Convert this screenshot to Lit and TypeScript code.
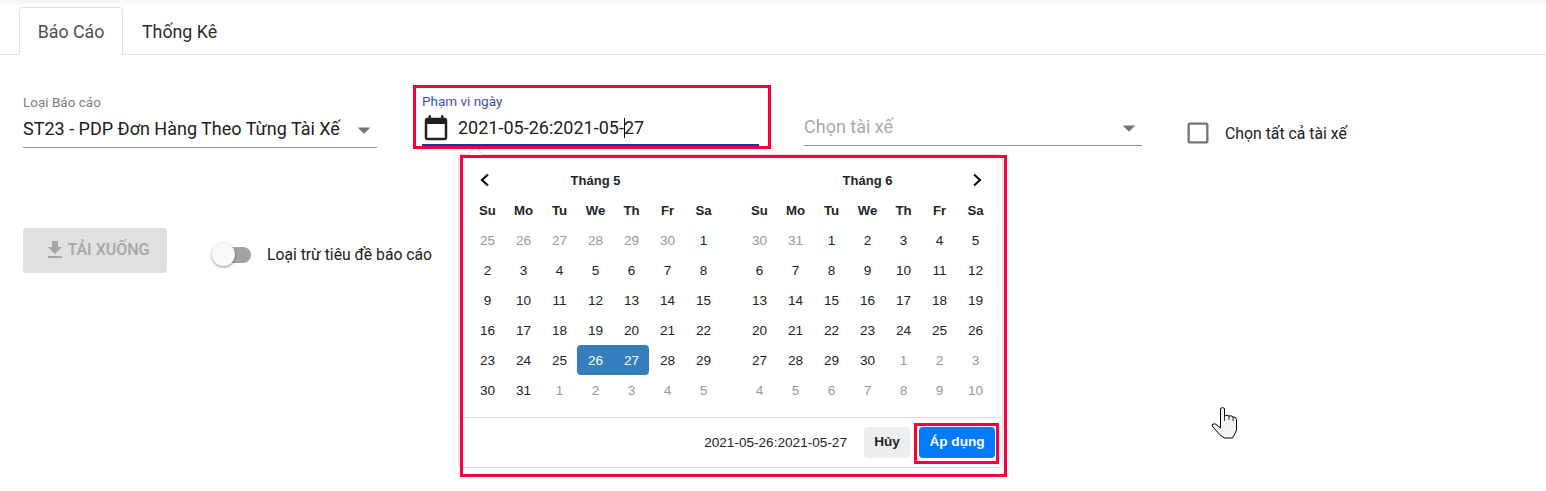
import { LitElement, html, css, svg } from "lit";
import { customElement } from "lit/decorators.js";

type Day = { d: number; off?: boolean; sel?: "start" | "end" };

const range = (a: number, b: number, off = false): Day[] => {
  const r: Day[] = [];
  for (let i = a; i <= b; i++) r.push({ d: i, off });
  return r;
};

const may: Day[] = [
  ...range(25, 30, true),
  ...range(1, 25),
  { d: 26, sel: "start" },
  { d: 27, sel: "end" },
  ...range(28, 31),
  ...range(1, 5, true),
];
const june: Day[] = [...range(30, 31, true), ...range(1, 30), ...range(1, 10, true)];
const WEEK = ["Su", "Mo", "Tu", "We", "Th", "Fr", "Sa"];

const arrowDown = svg`<path d="M7 10l5 5 5-5z"></path>`;

@customElement("app-root")
export class AppRoot extends LitElement {
  static styles = css`
    :host {
      display: block;
      position: relative;
      width: 1546px;
      height: 491px;
      overflow: hidden;
      background: #fff;
      font-family: Roboto, "Noto Sans", sans-serif;
      color: #212121;
    }
    .topshade {
      height: 7px;
      margin-bottom: -7px;
      background: linear-gradient(#f5f5f5, #fff);
    }
    .tabs {
      display: flex;
      height: 47px;
      padding-top: 7px;
      padding-left: 19px;
      border-bottom: 1px solid #dee2e6;
      font-size: 17.8px;
    }
    .tab {
      box-sizing: border-box;
      height: 48px;
      padding: 0 18px;
      display: flex;
      align-items: center;
      justify-content: center;
      border: 1px solid transparent;
      color: #2b2b2b;
    }
    .tab.active {
      width: 104px;
      padding: 0;
      border-color: #dee2e6 #dee2e6 #fff;
      border-radius: 4px 4px 0 0;
      background: #fff;
      color: #495057;
    }
    .row1 {
      display: flex;
      align-items: flex-start;
      padding: 37px 0 0 23px;
      height: 56px;
    }
    .label {
      font-size: 13.5px;
      line-height: 16px;
      color: #808080;
      white-space: nowrap;
    }
    .f1 { width: 354px; margin-top: 2px; margin-right: 45px; }
    .f2 { width: 337px; margin-right: 45px; margin-top: 1px; }
    .f3 { width: 338px; margin-right: 45px; margin-top: 16px; }
    .select {
      box-sizing: border-box;
      display: flex;
      align-items: center;
      justify-content: space-between;
      border-bottom: 1px solid #949494;
      white-space: nowrap;
    }
    .f1 .select { height: 38px; font-size: 18px; color: #212121; }
    .f3 .select { height: 38px; font-size: 18px; color: #a9a9a9; }
    .select svg { width: 30px; height: 30px; fill: #757575; margin: 2px -2px 0 0; }
    .f2 .label { color: #3f51b5; }
    .date {
      box-sizing: border-box;
      display: flex;
      align-items: center;
      height: 37px;
      padding-top: 1px;
      border-bottom: 2px solid #283593;
      font-size: 18px;
      color: #212121;
    }
    .date svg { width: 30px; height: 30px; margin: 3px 7px 0 -1px; fill: #212121; flex: none; }
    .caret { display: inline-block; width: 1px; height: 20px; background: #000; vertical-align: -4px; margin-right: -1px; }
    .check {
      display: flex;
      align-items: center;
      margin-top: 27px;
      font-size: 15.8px;
      white-space: nowrap;
    }
    .check svg { width: 28px; height: 28px; fill: #757575; margin-left: -3px; margin-right: 13px; }
    .row2 {
      display: flex;
      align-items: flex-start;
      margin-top: 80px;
      padding-left: 23px;
    }
    .download {
      box-sizing: border-box;
      display: flex;
      align-items: center;
      justify-content: center;
      width: 144px;
      height: 45px;
      padding: 0 0 2px 5px;
      border-radius: 4px;
      background: #e0e0e0;
      color: #a6a6a6;
      font-size: 16px;
      font-weight: 500;
    }
    .download svg { width: 24px; height: 24px; fill: #a6a6a6; margin-right: 1px; margin-left: -3px; }
    .toggle {
      display: flex;
      align-items: center;
      margin-left: 45px;
      margin-top: 17px;
      font-size: 15.7px;
      white-space: nowrap;
    }
    .track {
      position: relative;
      width: 36px;
      height: 16px;
      margin-left: 3px;
      margin-right: 16px;
      border-radius: 8px;
      background: #a3a3a3;
    }
    .thumb {
      position: absolute;
      left: -3px;
      top: -4px;
      width: 23px;
      height: 23px;
      border-radius: 50%;
      background: #fafafa;
      box-shadow: 0 1px 3px rgba(0, 0, 0, 0.45);
    }
    .popup {
      position: absolute;
      left: 458px;
      top: 154px;
      box-sizing: border-box;
      width: 545px;
      height: 314px;
      border: 1px solid #ddd;
      border-radius: 4px;
      background: #fff;
      font-family: "Liberation Sans", Arial, sans-serif;
      font-size: 13.6px;
      color: #212529;
    }
    .notch {
      position: absolute;
      left: 11px;
      top: -7px;
      width: 10px;
      height: 10px;
      transform: rotate(45deg) scale(0.95);
      border-left: 1px solid #ddd;
      border-top: 1px solid #ddd;
      background: #fff;
    }
    .cals {
      display: flex;
      gap: 20px;
      padding: 10px 0 0 10px;
      height: 252px;
    }
    .grid {
      display: grid;
      grid-template-columns: repeat(7, 36px);
      grid-auto-rows: 30px;
      width: 252px;
    }
    .cell {
      display: flex;
      align-items: center;
      justify-content: center;
      padding-left: 1px;
    }
    .month { grid-column: 2 / 7; font-weight: bold; font-size: 13px; }
    .wd { font-weight: bold; font-size: 13.2px; }
    .off { color: #999; }
    .sel { background: #357ebd; color: #fff; }
    .sel.start { border-radius: 4px 0 0 4px; }
    .sel.end { border-radius: 0 4px 4px 0; }
    .cell svg { width: 14px; height: 14px; fill: none; stroke: #111; stroke-width: 2.2; }
    .prev { margin-left: -5px; }
    .next { margin-left: 2px; }
    .foot {
      display: flex;
      align-items: center;
      justify-content: flex-end;
      box-sizing: border-box;
      height: 50px;
      border-top: 1px solid #ddd;
      padding-right: 7px;
    }
    .foot span { margin-right: 17px; }
    .btn {
      box-sizing: border-box;
      display: flex;
      align-items: center;
      justify-content: center;
      height: 31px;
      padding-bottom: 3px;
      border-radius: 4px;
      font-weight: bold;
      font-size: 13.6px;
    }
    .cancel { width: 46px; background: #eee; color: #212529; margin-right: 9px; }
    .apply { width: 76px; background: #007bff; color: #fff; }
    .mark {
      position: absolute;
      box-sizing: border-box;
      border: 3px solid #f8003e;
      pointer-events: none;
    }
    .m1 { left: 413px; top: 85px; width: 358px; height: 64px; }
    .m2 { left: 460px; top: 155px; width: 547px; height: 322px; }
    .m3 { left: 914px; top: 423px; width: 85px; height: 41px; }
    .hand { position: absolute; left: 1211px; top: 406px; width: 26px; height: 33px; }
  `;

  private calendar(title: string, days: Day[], side: "prev" | "next") {
    const chev =
      side === "prev"
        ? svg`<path d="M10 1.5 L4 7 L10 12.5"></path>`
        : svg`<path d="M4 1.5 L10 7 L4 12.5"></path>`;
    return html`<div class="grid">
      <div class="cell">${side === "prev" ? html`<svg class="prev" viewBox="0 0 14 14">${chev}</svg>` : ""}</div>
      <div class="cell month">${title}</div>
      <div class="cell">${side === "next" ? html`<svg class="next" viewBox="0 0 14 14">${chev}</svg>` : ""}</div>
      ${WEEK.map((w) => html`<div class="cell wd">${w}</div>`)}
      ${days.map(
        (x) =>
          html`<div class="cell ${x.off ? "off" : ""} ${x.sel ? `sel ${x.sel}` : ""}">${x.d}</div>`
      )}
    </div>`;
  }

  render() {
    return html`
      <div class="topshade"></div>
      <div class="tabs">
        <div class="tab active">Báo Cáo</div>
        <div class="tab">Thống Kê</div>
      </div>
      <div class="row1">
        <div class="f1">
          <div class="label">Loại Báo cáo</div>
          <div class="select">
            <span>ST23 - PDP Đơn Hàng Theo Từng Tài Xế</span>
            <svg viewBox="0 0 24 24">${arrowDown}</svg>
          </div>
        </div>
        <div class="f2">
          <div class="label">Phạm vi ngày</div>
          <div class="date">
            <svg viewBox="0 0 24 24"><path d="M19 3h-1V1h-2v2H8V1H6v2H5c-1.11 0-1.99.9-1.99 2L3 19c0 1.1.89 2 2 2h14c1.1 0 2-.9 2-2V5c0-1.1-.9-2-2-2zm0 16H5V8h14v11z"></path></svg>
            <span>2021-05-26:2021-05-<i class="caret"></i>27</span>
          </div>
        </div>
        <div class="f3">
          <div class="select">
            <span>Chọn tài xế</span>
            <svg viewBox="0 0 24 24">${arrowDown}</svg>
          </div>
        </div>
        <div class="check">
          <svg viewBox="0 0 24 24"><path d="M19 5v14H5V5h14m0-2H5c-1.1 0-2 .9-2 2v14c0 1.1.9 2 2 2h14c1.1 0 2-.9 2-2V5c0-1.1-.9-2-2-2z"></path></svg>
          <span>Chọn tất cả tài xế</span>
        </div>
      </div>
      <div class="row2">
        <div class="download">
          <svg viewBox="0 0 24 24"><path d="M19 9h-4V3H9v6H5l7 7 7-7zM5 18v2h14v-2H5z"></path></svg>
          <span>TẢI XUỐNG</span>
        </div>
        <div class="toggle">
          <div class="track"><div class="thumb"></div></div>
          <span>Loại trừ tiêu đề báo cáo</span>
        </div>
      </div>
      <div class="popup">
        <div class="notch"></div>
        <div class="cals">
          ${this.calendar("Tháng 5", may, "prev")} ${this.calendar("Tháng 6", june, "next")}
        </div>
        <div class="foot">
          <span>2021-05-26:2021-05-27</span>
          <div class="btn cancel">Hủy</div>
          <div class="btn apply">Áp dụng</div>
        </div>
      </div>
      <div class="mark m1"></div>
      <div class="mark m2"></div>
      <div class="mark m3"></div>
      <svg class="hand" viewBox="0 0 26 33">
        <path d="M9.5 2.5 Q11.5 0.5 13.5 2.5 V10 Q16 8.5 18 10 Q20 9 22 11 Q25 10.5 25.5 13.5 V24 Q24.5 27 21.5 32 H13.5 Q10 30.5 7.5 27 L1 20 Q1 17 4.5 18 L9.5 22 Z" fill="#f1f4f1" stroke="#000" stroke-width="1"></path>
        <path d="M13.5 10 V15 M18 10 V14 M22 11 V15" fill="none" stroke="#000" stroke-width="0.8"></path>
      </svg>
    `;
  }
}
